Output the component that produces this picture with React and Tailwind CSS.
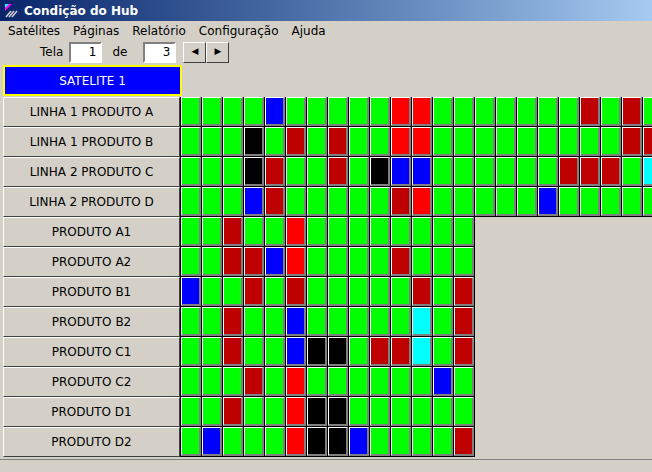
import React from "react";

const top = [
  ["LINHA 1 PRODUTO A", "GGGGBGGGGGRRGGGGGGGDGDG"],
  ["LINHA 1 PRODUTO B", "GGGKGDGDGGRRGGGGGGGGGDD"],
  ["LINHA 2 PRODUTO C", "GGGKDGGDGKBBGGGGGGDDDGC"],
  ["LINHA 2 PRODUTO D", "GGGBDGGGGGDRGGGGGBGGGGG"],
];
const bottom = [
  ["PRODUTO A1", "GGDGGRGGGGGGGG"],
  ["PRODUTO A2", "GGDDBRGGGGDGGG"],
  ["PRODUTO B1", "BGGDGDGGGGGDGD"],
  ["PRODUTO B2", "GGDGGBGGGGGCGD"],
  ["PRODUTO C1", "GGDGGBKKGDDCGD"],
  ["PRODUTO C2", "GGGDGRGGGGGGBG"],
  ["PRODUTO D1", "GGDGGRKKGGGGGG"],
  ["PRODUTO D2", "GBGGGRKKBGGGGD"],
];

const fill = {
  G: "bg-[#00ff00]",
  B: "bg-[#0000ff]",
  R: "bg-[#ff0000]",
  D: "bg-[#bf0000]",
  K: "bg-black",
  C: "bg-[#00ffff]",
};

const Cell = ({ c }) => (
  <div className="w-[21px] h-[30px] shrink-0 border-r border-b border-black">
    <div
      className={`w-full h-full border-t border-l border-white border-r-2 border-b-2 border-r-[#808080] border-b-[#808080] ${fill[c]}`}
    />
  </div>
);

const Label = ({ text }) => (
  <div className="w-[177px] h-[30px] shrink-0 flex items-center justify-center border border-t-white border-l-white border-r-[#404040] border-b-[#404040] bg-[#d4d0c8] text-[12px] text-black">
    {text}
  </div>
);

const Row = ({ label, cells, open }) => (
  <div className="flex">
    <div className="pl-[3px]">
      <Label text={label} />
    </div>
    <div className={`flex ${open ? "" : "border-l border-black"}`}>
      {cells.split("").map((c, i) => (
        <Cell key={i} c={c} />
      ))}
    </div>
  </div>
);

export default function App() {
  return (
    <div
      className="w-[652px] h-[472px] overflow-hidden bg-[#d4d0c8] flex flex-col"
      style={{ fontFamily: "Tahoma, 'DejaVu Sans', sans-serif" }}
    >
      <div className="h-[21px] flex items-center gap-1 px-1 bg-gradient-to-r from-[#0a246a] to-[#a6caf0] text-white text-[12px] font-bold">
        <svg width="16" height="16" viewBox="0 0 16 16">
          <polygon points="1,1 8,1 1,8" fill="#ff00ff" />
          <polygon points="1,1 5,1 1,5" fill="#00ffff" />
          <path d="M2 14 L7 8 M5 14 L10 8 M8 14 L13 8" stroke="#d0d0d0" strokeWidth="1.5" />
        </svg>
        <span>Condição do Hub</span>
      </div>
      <div className="h-[20px] flex items-center gap-[13px] px-[8px] text-[12px] text-black">
        <span>Satélites</span>
        <span>Páginas</span>
        <span>Relatório</span>
        <span>Configuração</span>
        <span>Ajuda</span>
      </div>
      <div className="h-[22px] flex items-center text-[12px] text-black">
        <span className="ml-[40px]">Tela</span>
        <div className="ml-[6px] w-[33px] h-[21px] bg-white border-2 border-t-[#808080] border-l-[#808080] border-r-white border-b-white text-right pr-1 leading-[17px]">1</div>
        <span className="ml-[10px]">de</span>
        <div className="ml-[16px] w-[33px] h-[21px] bg-white border-2 border-t-[#808080] border-l-[#808080] border-r-white border-b-white text-right pr-1 leading-[17px]">3</div>
        <div className="ml-[7px] flex">
          {["◀", "▶"].map((a) => (
            <div key={a} className="w-[23px] h-[21px] flex items-center justify-center border border-t-white border-l-white border-r-[#404040] border-b-[#404040] text-[9px]">
              {a}
            </div>
          ))}
        </div>
      </div>
      <div className="h-[34px] pt-[2px] pl-[3px]">
        <div className="w-[179px] h-[31px] bg-[#0000ff] border-2 border-[#ffff00] flex items-center justify-center text-white text-[12px]">
          SATELITE 1
        </div>
      </div>
      <div className="flex flex-col border-t-0">
        {top.map(([l, c]) => (
          <Row key={l} label={l} cells={c} />
        ))}
        {bottom.map(([l, c]) => (
          <Row key={l} label={l} cells={c} />
        ))}
      </div>
      <div className="flex-1 border-t border-[#808080] mt-[2px]" />
    </div>
  );
}
